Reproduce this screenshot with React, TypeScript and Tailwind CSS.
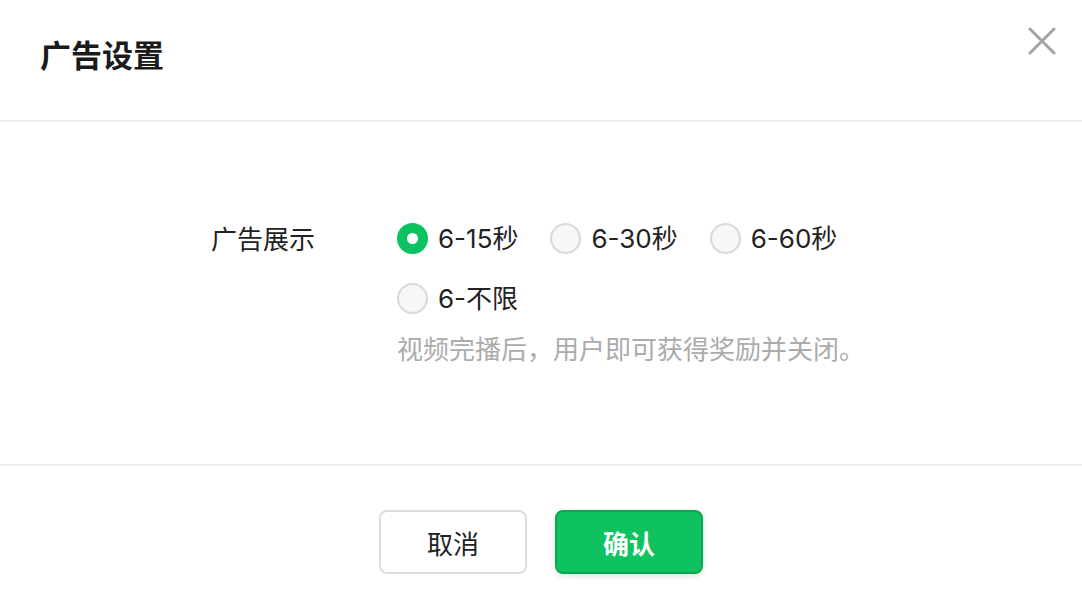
import { useState } from 'react';

const options = ['6-15秒', '6-30秒', '6-60秒', '6-不限'];

function Radio({ checked }: { checked: boolean }) {
  if (checked) {
    return (
      <span className="flex h-[31px] w-[31px] shrink-0 items-center justify-center rounded-full bg-[#0cc160]">
        <span className="h-[11px] w-[11px] rounded-full bg-white" />
      </span>
    );
  }
  return <span className="h-[31px] w-[31px] shrink-0 rounded-full border-2 border-[#d9d9d9] bg-[#f7f7f7]" />;
}

export default function App() {
  const [selected, setSelected] = useState(0);

  return (
    <div className="flex h-[600px] w-[1082px] flex-col bg-white font-['Inter','Noto_Sans_CJK_SC',sans-serif] text-[#1a1a1a]">
      <div className="relative flex h-[120px] shrink-0 items-center px-[40px] pb-[11px]">
        <h1 className="text-[31px] font-bold font-['Noto_Sans_CJK_SC',sans-serif]">广告设置</h1>
        <button className="absolute right-[26px] top-[27px] text-[#a3a3a3]" aria-label="关闭">
          <svg width="28" height="28" viewBox="0 0 28 28" fill="none" stroke="currentColor" strokeWidth="3" strokeLinecap="round">
            <path d="M2 2 L26 26 M26 2 L2 26" />
          </svg>
        </button>
      </div>
      <div className="h-[2px] shrink-0 bg-[#ededed]" />

      <div className="flex h-[342px] shrink-0 pl-[211px] pt-[96px]">
        <div className="w-[186px] shrink-0 text-[26px] leading-[40px] text-[#222] font-['Noto_Sans_CJK_SC',sans-serif]">广告展示</div>
        <div className="flex flex-col">
          <div className="flex w-[470px] flex-wrap gap-x-[32px] gap-y-[20px]">
            {options.map((o, i) => (
              <label key={o} className="flex h-[40px] cursor-pointer items-center gap-[10px]" onClick={() => setSelected(i)}>
                <Radio checked={selected === i} />
                <span className="text-[26px] text-[#222]">{o}</span>
              </label>
            ))}
          </div>
          <p className="mt-[12px] text-[26px] leading-[36px] text-[#ababab] font-['Noto_Sans_CJK_SC',sans-serif]">
            视频完播后，用户即可获得奖励并关闭。
          </p>
        </div>
      </div>
      <div className="h-[2px] shrink-0 bg-[#ededed]" />

      <div className="flex flex-1 justify-center gap-[28px] pt-[44px] font-['Noto_Sans_CJK_SC',sans-serif]">
        <button className="h-[64px] w-[148px] rounded-[8px] border-2 border-[#dcdcdc] bg-white text-[26px] text-[#222]">取消</button>
        <button className="h-[64px] w-[148px] rounded-[8px] border-2 border-[#0aa850] bg-[#0fc260] text-[26px] font-bold text-white shadow-[0_2px_6px_rgba(0,0,0,0.12)]">确认</button>
      </div>
    </div>
  );
}
